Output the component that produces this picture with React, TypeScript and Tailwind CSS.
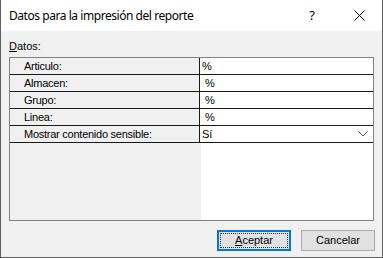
import React from "react";

const rows = [
  { label: "Articulo:", value: "%", pad: "pl-[2px]" },
  { label: "Almacen:", value: "%", pad: "pl-[5px]" },
  { label: "Grupo:", value: "%", pad: "pl-[5px]" },
  { label: "Linea:", value: "%", pad: "pl-[5px]" },
];

export default function App() {
  return (
    <div
      className="w-[383px] h-[258px] flex flex-col bg-[#f0f0f0] border-x border-b border-[#5f5f5f] overflow-hidden text-black"
      style={{ fontFamily: '"Liberation Sans", Arial, sans-serif' }}
    >
      {/* Title bar */}
      <div className="h-[31px] shrink-0 bg-white flex items-center pl-[8px]">
        <span
          className="text-[12px] leading-none tracking-[-0.45px]"
          style={{ fontFamily: '"Noto Sans", "Open Sans", sans-serif' }}
        >
          Datos para la impresión del reporte
        </span>
        <div className="ml-auto flex items-center h-full">
          <span
            className="w-[46px] text-center text-[13px] leading-none mr-[1px]"
            style={{ fontFamily: '"Noto Sans", sans-serif' }}
          >
            ?
          </span>
          <span className="w-[46px] h-full flex items-center justify-center">
            <svg width="11" height="11" viewBox="0 0 11 11">
              <path d="M0.5 0.5 L10.5 10.5 M10.5 0.5 L0.5 10.5" stroke="#000" strokeWidth="1" fill="none" />
            </svg>
          </span>
        </div>
      </div>

      {/* Client */}
      <div className="flex-1 flex flex-col px-[8px] pt-[9px]">
        <div className="text-[11px] leading-[13px] h-[17px]">
          <span className="underline underline-offset-[1px]">D</span>atos:
        </div>
        <div className="h-[164px] border border-[#828282] flex flex-col">
          {rows.map((r) => (
            <div key={r.label} className="h-[17px] flex border-b border-[#1a1a1a]">
              <div className="w-[190px] pl-[14px] text-[11px] tracking-[-0.25px] leading-[16px] bg-[#f0f0f0] border-r border-[#1a1a1a]">
                {r.label}
              </div>
              <div className={`flex-1 bg-white text-[11px] leading-[16px] ${r.pad}`}>{r.value}</div>
            </div>
          ))}
          <div className="h-[17px] flex border-b border-[#1a1a1a]">
            <div className="w-[190px] pl-[14px] text-[11px] tracking-[-0.25px] leading-[16px] bg-[#f0f0f0] border-r border-[#1a1a1a]">
              Mostrar contenido sensible:
            </div>
            <div className="flex-1 bg-white text-[11px] leading-[16px] pl-[2px] flex items-center">
              <span>Sí</span>
              <svg className="ml-auto mr-[5px]" width="10" height="6" viewBox="0 0 10 6">
                <path d="M0.5 0.5 L5 5 L9.5 0.5" stroke="#555" strokeWidth="1" fill="none" />
              </svg>
            </div>
          </div>
          <div className="flex-1 flex">
            <div className="w-[191px] bg-[#f0f0f0]" />
            <div className="flex-1 bg-white" />
          </div>
        </div>

        {/* Buttons */}
        <div className="flex justify-end gap-[10px] mt-[9px] -mr-[1px]">
          <button className="w-[74px] h-[21px] border-2 border-[#0078d7] bg-[#e1e1e1] p-[1px] text-[11px] leading-none">
            <span className="w-full h-full flex items-center justify-center border border-dotted border-[#333]">
              <span>
                <span className="underline">A</span>ceptar
              </span>
            </span>
          </button>
          <button className="w-[74px] h-[21px] border border-[#adadad] bg-[#e1e1e1] text-[11px] leading-none flex items-center justify-center">
            Cancelar
          </button>
        </div>
      </div>
    </div>
  );
}
